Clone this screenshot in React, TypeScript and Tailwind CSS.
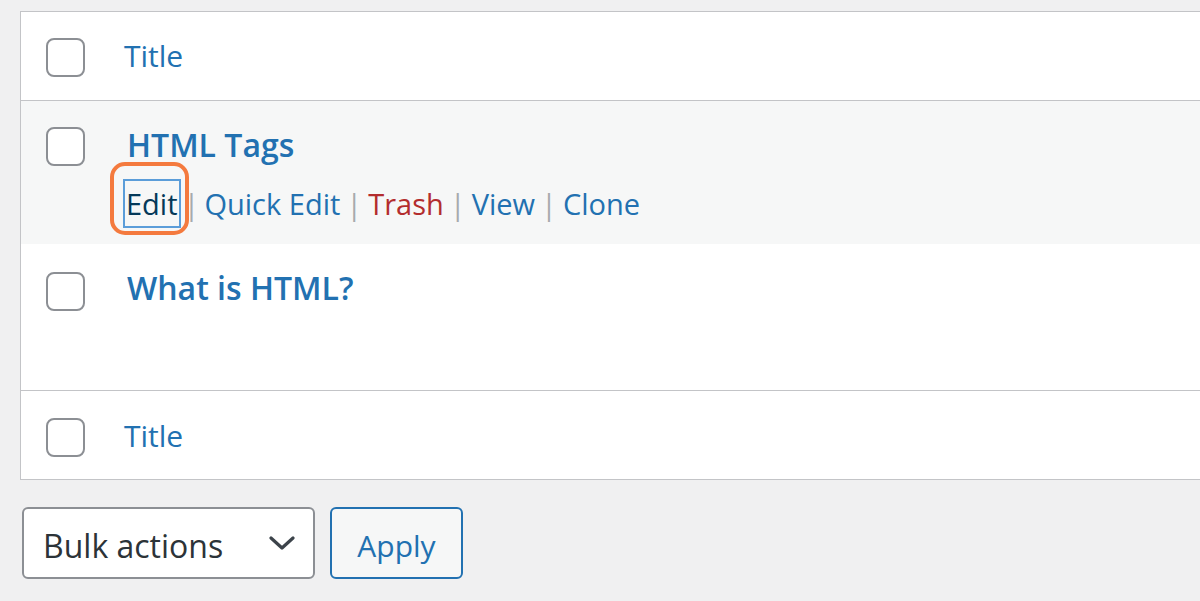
import React from "react";

const font = { fontFamily: '"Open Sans", "Noto Sans", sans-serif' };

function Checkbox() {
  return (
    <div className="w-[39px] h-[39px] rounded-[8px] border-[2px] border-[#8c8f94] bg-white shrink-0" />
  );
}

function Sep({ first = false }: { first?: boolean }) {
  return (
    <span className={first ? "text-[#a7aaad] ml-[3px] mr-[5px]" : "text-[#a7aaad] mx-[6px]"}>|</span>
  );
}

export default function App() {
  return (
    <div
      className="w-[1200px] h-[601px] overflow-hidden bg-[#f0f0f1] pl-[20px] pt-[11px]"
      style={font}
    >
      <div className="w-[1200px] border border-r-0 border-[#c3c4c7] bg-white">
        {/* header */}
        <div className="h-[89px] border-b border-[#c3c4c7] flex items-start pl-[25px] pt-[26px]">
          <Checkbox />
          <div className="ml-[39px] mt-[-4px] text-[30px] leading-[44px] text-[#2271b1]">Title</div>
        </div>
        {/* row 1 */}
        <div className="h-[143px] bg-[#f6f7f7] flex items-start pl-[25px] pt-[26px]">
          <Checkbox />
          <div className="ml-[42px] flex flex-col">
            <div className="mt-[-4px] text-[32px] leading-[44px] font-semibold text-[#2271b1]">
              HTML Tags
            </div>
            <div className="mt-[12px] text-[29px] leading-[44px] whitespace-pre ml-[-4px] relative flex items-center">
              <span className="inline-block border-[2px] border-[#5b9dd9] px-[1px] leading-[45px] text-[#043959]">Edit</span>
              <Sep first />
              <span className="text-[#2271b1]">Quick Edit</span>
              <Sep />
              <span className="text-[#b32d2e]">Trash</span>
              <Sep />
              <span className="text-[#2271b1]">View</span>
              <Sep />
              <span className="text-[#2271b1]">Clone</span>
              <div className="absolute left-[-13px] top-[-17px] w-[79px] h-[73px] rounded-[15px] border-[4px] border-[#f47a3e]" />
            </div>
          </div>
        </div>
        {/* row 2 */}
        <div className="h-[147px] border-b border-[#c3c4c7] flex items-start pl-[25px] pt-[28px]">
          <Checkbox />
          <div className="ml-[42px] mt-[-6px] text-[32px] leading-[44px] font-semibold text-[#2271b1]">
            What is HTML?
          </div>
        </div>
        {/* footer */}
        <div className="h-[88px] flex items-start pl-[25px] pt-[27px]">
          <Checkbox />
          <div className="ml-[39px] mt-[-4px] text-[30px] leading-[44px] text-[#2271b1]">Title</div>
        </div>
      </div>
      {/* bulk actions */}
      <div className="flex items-start gap-[15px] mt-[27px] ml-[2px]">
        <div className="w-[293px] h-[72px] rounded-[6px] border-[2px] border-[#8c8f94] bg-white flex items-center justify-between pl-[19px] pr-[18px]">
          <span className="text-[32px] leading-[44px] mt-[6px] text-[#2c3338]">Bulk actions</span>
          <svg width="26" height="16" viewBox="0 0 26 16" fill="none">
            <path d="M2 3 L13 13 L24 3" stroke="#3c434a" strokeWidth="3.2" strokeLinecap="round" strokeLinejoin="round" />
          </svg>
        </div>
        <div className="w-[133px] h-[72px] rounded-[6px] border-[2px] border-[#2271b1] bg-[#f6f7f7] flex items-center justify-center">
          <span className="text-[30px] leading-[44px] mt-[6px] text-[#2271b1]">Apply</span>
        </div>
      </div>
    </div>
  );
}
